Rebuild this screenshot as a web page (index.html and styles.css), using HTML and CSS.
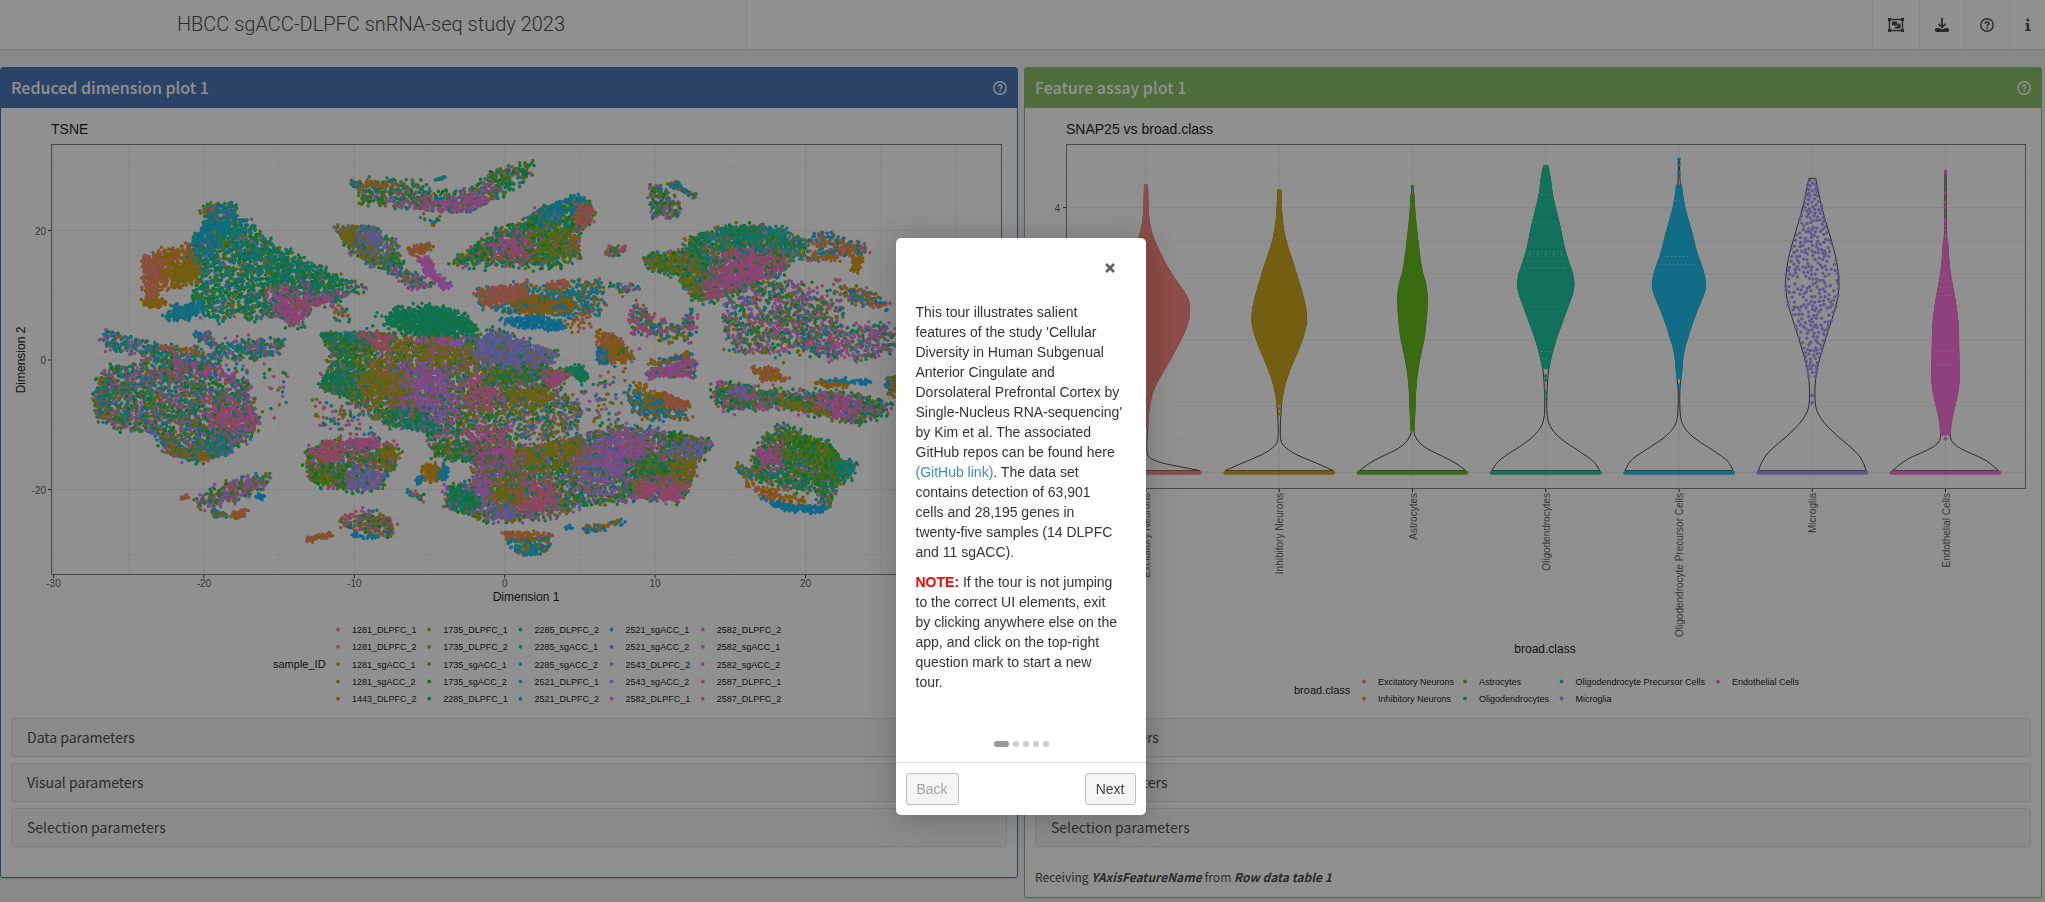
FILE: index.html
```html
<!DOCTYPE html>
<html lang="en">
<head>
<meta charset="utf-8">
<title>HBCC sgACC-DLPFC snRNA-seq study 2023</title>
<link rel="stylesheet" href="styles.css">
</head>
<body>
<header class="topbar">
  <h1 class="brand">HBCC sgACC-DLPFC snRNA-seq study 2023</h1>
  <nav class="tools">
    <a class="tool" href="#organize" aria-label="Organization">
      <svg width="16" height="14" viewBox="0 0 16 14" fill="none" stroke="currentColor"><path d="M1.5 1.5h13v11h-13z" stroke-width="1.4"/><path d="M0 0h3v3H0zM13 0h3v3h-3zM0 11h3v3H0zM13 11h3v3h-3zM4 3.500h5v4H4zM9.500 5.500H12.500v5H7V8.500h2.500z" fill="currentColor" stroke="none"/></svg>
    </a>
    <a class="tool" href="#export" aria-label="Export">
      <svg width="14" height="16" viewBox="0 0 14 16" fill="none" stroke="currentColor" stroke-width="1.8"><path d="M7 1v9M3.500 6.800L7 10.300l3.500-3.500"/><path d="M1.800 11H4l3 1.600L10 11h2.200A1.600 1.600 0 0 1 12.200 15H1.800A1.600 1.600 0 0 1 1.800 11z" fill="currentColor" stroke="none"/></svg>
    </a>
    <a class="tool" href="#help" aria-label="Documentation">
      <svg width="14" height="14" viewBox="0 0 14 14" fill="none" stroke="currentColor" stroke-width="1.4"><circle cx="7" cy="7" r="6.200"/><path d="M5.100 5.600C5.200 3.400 8.900 3.500 8.900 5.500C8.900 6.900 7.100 6.800 7.100 8.400M7.100 9.400v1.500" stroke-width="1.5"/></svg>
    </a>
    <a class="tool" href="#info" aria-label="Additional information">
      <svg width="6" height="14" viewBox="0 0 6 14" fill="currentColor"><circle cx="2.900" cy="2" r="1.500"/><path d="M.5 5h3.700v6.500H5.800V13H.2v-1.500h1.500v-5H.5z"/></svg>
    </a>
  </nav>
</header>

<main class="panels">
  <section class="panel panel-blue">
    <header class="panel-head">
      <h2 class="panel-title">Reduced dimension plot 1</h2>
      <a class="panel-help" href="#tour1" aria-label="Help">
        <svg width="14" height="14" viewBox="0 0 14 14" fill="none" stroke="currentColor" stroke-width="1.4"><circle cx="7" cy="7" r="6.200"/><path d="M5.100 5.600C5.200 3.400 8.900 3.500 8.900 5.500C8.900 6.900 7.100 6.800 7.100 8.400M7.100 9.400v1.500"/></svg>
      </a>
    </header>
    <svg class="plot" id="tsne" viewBox="1 108 1016 610" role="img" aria-label="TSNE plot"></svg>
    <div class="params">
      <button class="param" type="button">Data parameters</button>
      <button class="param" type="button">Visual parameters</button>
      <button class="param" type="button">Selection parameters</button>
    </div>
  </section>

  <section class="panel panel-green">
    <header class="panel-head">
      <h2 class="panel-title">Feature assay plot 1</h2>
      <a class="panel-help" href="#tour2" aria-label="Help">
        <svg width="14" height="14" viewBox="0 0 14 14" fill="none" stroke="currentColor" stroke-width="1.4"><circle cx="7" cy="7" r="6.200"/><path d="M5.100 5.600C5.200 3.400 8.900 3.500 8.900 5.500C8.900 6.900 7.100 6.800 7.100 8.400M7.100 9.400v1.500"/></svg>
      </a>
    </header>
    <svg class="plot" id="violin" viewBox="1025 108 1016 610" role="img" aria-label="SNAP25 vs broad.class"></svg>
    <div class="params">
      <button class="param" type="button">Data parameters</button>
      <button class="param" type="button">Visual parameters</button>
      <button class="param" type="button">Selection parameters</button>
    </div>
    <p class="receiving">Receiving <em>YAxisFeatureName</em> from <em>Row data table 1</em></p>
  </section>
</main>

<div class="overlay"></div>
<div class="tour" role="dialog" aria-label="Tour">
  <div class="tour-head"><button class="tour-close" type="button" aria-label="Close"><svg width="10" height="10" viewBox="0 0 10 10" stroke="currentColor" stroke-width="2.500"><path d="M1 1l8 8M9 1L1 9"/></svg></button></div>
  <div class="tour-text">
    <p>This tour illustrates salient features of the study 'Cellular Diversity in Human Subgenual Anterior Cingulate and Dorsolateral Prefrontal Cortex by Single-Nucleus RNA-sequencing' by Kim et al. The associated GitHub repos can be found here <a href="#github">(GitHub link)</a>. The data set contains detection of 63,901<br>cells and 28,195 genes in<br>twenty-five samples (14 DLPFC<br>and 11 sgACC).</p>
    <p><strong>NOTE:</strong> If the tour is not jumping to the correct UI elements, exit<br>by clicking anywhere else on the app, and click on the top-right question mark to start a new<br>tour.</p>
  </div>
  <div class="tour-dots">
    <a class="dot dot-active" href="#s1" aria-label="Step 1"></a><a class="dot" href="#s2" aria-label="Step 2"></a><a class="dot" href="#s3" aria-label="Step 3"></a><a class="dot" href="#s4" aria-label="Step 4"></a><a class="dot" href="#s5" aria-label="Step 5"></a>
  </div>
  <div class="tour-foot">
    <button class="tour-btn tour-off" type="button">Back</button>
    <button class="tour-btn" type="button">Next</button>
  </div>
</div>
<script src="plots.js"></script>
</body>
</html>
```
FILE: styles.css
```css
* { box-sizing: border-box; }

body {
  margin: 0;
  min-height: 100vh;
  background: #ecf0f5;
  color: #333;
  font: 14px/20px "Liberation Sans", Arial, sans-serif;
}

.topbar {
  display: flex;
  height: 50px;
  background: #fff;
  border-bottom: 1px solid #d2d6de;
}

.brand {
  width: 747px;
  margin: 0;
  padding-right: 4px;
  border-right: 1px solid #eee;
  font-family: Roboto, "Liberation Sans", sans-serif;
  font-size: 20px;
  font-weight: 300;
  line-height: 48px;
  text-align: center;
}

.tools { display: flex; margin-left: auto; }

.tool {
  display: flex;
  align-items: center;
  padding: 0 15px;
  border-left: 1px solid #eee;
  color: #333;
}

.tool:last-child { padding-right: 14px; }

.panels {
  display: grid;
  grid-template-columns: 1fr 1fr;
  gap: 6px;
  align-items: start;
  padding: 17px 3px 0 0;
}

.panel {
  padding-bottom: 30px;
  background: #fff;
  border: 1px solid;
  border-radius: 3px;
  box-shadow: 0 1px 1px rgba(0, 0, 0, 0.1);
}

.panel-blue { border-color: #3565aa; }
.panel-green { border-color: #7bb854; padding-bottom: 10px; }
.panel-blue .panel-head { background: #3565aa; }
.panel-green .panel-head { background: #7bb854; }

.panel-head {
  display: flex;
  align-items: center;
  justify-content: space-between;
  height: 40px;
  padding: 0 10px;
  color: #fff;
}

.panel-title {
  margin: 0;
  padding-bottom: 2px;
  font-family: "Noto Sans CJK SC", "Noto Sans", sans-serif;
  font-size: 16px;
  font-weight: 500;
  line-height: 20px;
}

.panel-help { display: flex; color: #fff; }

.plot {
  display: block;
  width: 100%;
  font-family: "Liberation Sans", Arial, sans-serif;
}

.plot .title { font-size: 14px; }
.plot .axis { font-size: 12px; }
.plot .key { font-size: 11px; }
.plot .label { font-size: 9px; }
.plot .tick { font-size: 10px; fill: #4d4d4d; }

.params {
  display: flex;
  flex-direction: column;
  gap: 6px;
  padding: 0 10px;
}

.param {
  height: 39px;
  padding: 0 15px 1px;
  border: 1px solid #ddd;
  border-radius: 3px;
  background: #f5f5f5;
  box-shadow: 0 1px 1px rgba(0, 0, 0, 0.05);
  color: #333;
  font: 14px/20px "Noto Sans CJK SC", "Noto Sans", sans-serif;
  text-align: left;
}

.receiving {
  margin: 20px 10px 0;
  font: 12px/20px "Noto Sans CJK SC", "Noto Sans", sans-serif;
}

.receiving em { font-weight: 700; }

.overlay {
  position: fixed;
  inset: 0;
  background: rgba(33, 33, 33, 0.5);
}

.tour {
  position: absolute;
  top: 238px;
  left: calc(50% - 127px);
  width: 250px;
  border-radius: 5px;
  background: #fff;
  box-shadow: 0 3px 30px rgba(33, 33, 33, 0.3);
}

.tour-head {
  display: flex;
  justify-content: flex-end;
  height: 44px;
  padding: 20px 26px 0;
}

.tour-close {
  width: 20px;
  height: 20px;
  padding: 5px;
  border: 0;
  background: none;
  color: #616161;
  line-height: 0;
}

.tour-text { padding: 20px; }
.tour-text p { margin: 0 0 10px; }
.tour-text a { color: #3c8dbc; text-decoration: none; }
.tour-text strong { color: #f00; }

.tour-dots {
  display: flex;
  align-items: center;
  justify-content: center;
  gap: 4px;
  height: 40px;
  padding: 4px 0 0 2px;
}

.dot {
  width: 6px;
  height: 6px;
  border-radius: 10px;
  background: #ccc;
}

.dot-active { width: 15px; background: #999; }

.tour-foot {
  display: flex;
  justify-content: space-between;
  padding: 10px;
  border-top: 1px solid #e0e0e0;
}

.tour-btn {
  height: 32px;
  padding: 5px 10px;
  border: 1px solid #bdbdbd;
  border-radius: 3px;
  background: #f4f4f4;
  color: #424242;
  font: 14px/20px "Liberation Sans", Arial, sans-serif;
  text-shadow: 1px 1px 0 #fff;
}

.tour-off { color: #9e9e9e; }
```
FILE: plots.js
```js
// Small seeded generator so the plots are the same on every load.
let seed = 20230;
function rnd() {
  seed = (seed * 1664525 + 1013904223) % 4294967296;
  return seed / 4294967296;
}
function text(cls, x, y, s, extra) {
  return `<text class="${cls}" x="${x}" y="${y}" ${extra || ''}>${s}</text>`;
}
function line(x1, y1, x2, y2, colour, w) {
  return `<path d="M${x1} ${y1}L${x2} ${y2}" stroke="${colour}" stroke-width="${w}" fill="none"/>`;
}
const MID = 'text-anchor="middle"', END = 'text-anchor="end"';

// ---------- TSNE ----------
const hues = ['#F8766D', '#ED8141', '#E08B00', '#CF9400', '#BB9D00', '#A3A500', '#85AD00', '#5BB300', '#00B81F',
  '#00BC59', '#00BF7D', '#00C19C', '#00C0B8', '#00BDD0', '#00B8E5', '#00B0F6', '#00A5FF', '#7997FF', '#AC88FF',
  '#CF78FF', '#E76BF3', '#F763E0', '#FF62C6', '#FF65AE', '#FF6C90'];
const groups = {
  r: [0, 1], o: [2, 3], y: [4, 5], g: [6, 7, 8], e: [9, 10, 11], t: [12, 13], b: [14, 15, 16],
  p: [17, 18], v: [19, 20], m: [21, 22, 23], k: [23, 24], '*': hues.map((_, i) => i)
};
// Colour mix, number of cells, outline (a third of a pixel per unit, from 80,140).
const clusters = [
  ['*eetge', 2000, '370,200 465,185 475,230 520,250 540,290 640,340 680,370 780,410 870,450 800,465 740,490 700,500 660,555 630,555 600,530 480,535 400,540 340,500 340,450 370,430 330,350 330,300 370,260'],
  ['tte', 260, '390,230 465,190 470,290 560,330 640,380 560,390 430,330'],
  ['e', 260, '560,350 690,380 770,420 760,450 640,420'],
  ['oor', 430, '240,330 330,320 355,370 350,425 290,440 220,450 225,490 190,490 195,440'],
  ['r', 190, '190,345 235,340 240,400 230,470 205,470 190,410'],
  ['oy', 170, '270,370 350,370 355,420 280,440'],
  ['o', 60, '185,480 250,480 270,500 200,500'],
  ['ro', 40, '370,200 405,196 402,215 375,220'],
  ['bbt', 330, '335,290 390,240 440,190 460,210 410,250 400,330 350,330'],
  ['bbt', 160, '250,530 290,490 375,490 375,510 320,540 260,540'],
  ['m', 300, '590,470 670,460 700,500 660,555 635,558 600,510'],
  ['m', 70, '690,500 720,480 770,475 860,450 760,495'],
  ['*', 30, '750,490 810,500 810,540 770,545'],
  ['*evt', 620, '65,575 110,580 170,600 260,615 380,630 470,600 625,597 590,640 520,655 430,655 400,680 300,690 220,660 130,635 80,625'],
  ['or', 60, '240,612 370,622 365,630 240,625'],
  ['*b', 60, '340,578 390,580 410,620 350,600'],
  ['*', 60, '200,650 540,660 480,720 300,700'],
  ['*egvmtg', 2300, '90,680 200,670 290,660 330,720 440,735 500,715 525,790 540,850 500,900 440,945 350,965 260,940 230,880 120,865 50,830 45,770 60,710'],
  ['m*', 150, '290,660 400,680 470,700 460,720 330,715'],
  ['bo', 130, '45,740 65,700 78,720 75,860 50,830'],
  ['oob', 280, '110,880 180,905 250,925 350,945 440,940 430,955 340,965 240,945 170,920'],
  ['mk', 260, '380,820 500,800 515,870 450,890'],
  ['pte', 160, '370,890 470,890 460,935 390,950'],
  ['*', 22, '550,680 640,680 600,860 550,860'],
  ['*gv', 300, '350,1080 440,1030 520,1010 568,1010 540,1050 470,1080 360,1102'],
  ['bo', 60, '390,1105 430,1120 440,1130 400,1130'],
  ['ro', 50, '455,1120 500,1105 490,1130 460,1135'],
  ['b', 20, '525,1070 552,1060 545,1075 530,1078'],
  ['r', 12, '303,1065 328,1070 328,1075 305,1072'],
  ['or', 45, '670,1202 750,1178 755,1185 680,1206'],
  ['*kg', 250, '770,1145 850,1110 900,1125 950,1145 930,1185 870,1180 800,1160'],
  ['b', 20, '820,1185 890,1187 888,1193 825,1191'],
  ['*mge', 850, '680,930 760,900 900,895 965,935 930,1000 890,1050 800,1050 700,1030 680,990'],
  ['p', 230, '785,1015 910,1000 890,1050 800,1042'],
  ['g', 210, '685,990 780,990 790,1030 730,1035'],
  ['k', 160, '680,940 750,900 810,910 780,940 700,960'],
  ['m', 110, '810,895 900,895 890,920 820,920'],
  ['yo', 90, '900,935 965,935 930,985 900,970'],
  ['*', 75, '710,780 860,800 900,880 800,890 700,850'],
  ['o', 110, '1022,980 1060,970 1090,980 1085,1020 1050,1028 1025,1010'],
  ['b', 60, '1085,970 1105,985 1095,1015 1080,1015'],
  ['b', 20, '1010,1020 1025,1010 1022,1035 1012,1035'],
  ['*', 22, '965,1043 1042,1075 1035,1090 985,1065'],
  ['*vymgeyge', 3500, '720,580 850,575 1000,590 1200,590 1260,570 1350,610 1440,640 1400,690 1480,700 1420,740 1300,760 1260,830 1300,900 1400,950 1250,1000 1180,970 1060,950 1040,880 900,850 850,800 720,740 760,650'],
  ['*vymgepge', 3900, '1180,900 1300,930 1500,890 1600,860 1800,880 1900,905 1850,960 1840,1010 1820,1060 1790,1085 1700,1075 1600,1085 1500,1100 1430,1125 1350,1140 1200,1140 1100,1100 1100,1040 1180,1030'],
  ['*yve', 520, '1260,740 1420,740 1510,790 1500,860 1430,900 1270,890'],
  ['*', 60, '1500,690 1620,740 1640,850 1500,860'],
  ['e', 900, '915,545 960,505 1080,505 1160,535 1190,575 1100,590 1000,580'],
  ['e', 90, '880,530 960,495 1100,500 1240,560 1220,610 900,590'],
  ['gge', 300, '725,600 870,590 880,630 760,645'],
  ['et', 90, '720,580 820,575 820,590 725,595'],
  ['e', 480, '710,740 750,705 830,705 838,770 780,790 720,770'],
  ['v', 950, '930,690 1060,640 1120,740 1080,860 1010,850 930,780'],
  ['v', 130, '1020,590 1140,590 1130,625 1040,620'],
  ['y', 420, '840,680 980,680 960,790 900,810 840,770'],
  ['y', 340, '900,610 1030,610 1200,635 1230,670 1100,665 950,640'],
  ['e', 200, '900,820 1060,835 1050,880 950,865'],
  ['eg', 200, '1060,920 1180,920 1190,965 1100,960'],
  ['k', 170, '1165,740 1240,725 1240,790 1190,790'],
  ['k', 110, '850,575 950,590 920,615 860,600'],
  ['p', 850, '1180,610 1260,580 1400,640 1480,608 1450,660 1370,690 1250,680'],
  ['gge', 240, '1200,690 1400,690 1400,720 1220,725'],
  ['e', 110, '1460,690 1500,675 1525,710 1500,722'],
  ['mk', 190, '1400,710 1490,705 1490,730 1410,740'],
  ['y', 200, '1260,740 1400,730 1400,790 1290,780'],
  ['y', 360, '1310,930 1500,900 1510,950 1350,985'],
  ['vp', 450, '1500,930 1640,890 1640,1000 1520,1030'],
  ['mv', 260, '1620,880 1720,880 1700,970 1600,970'],
  ['m', 220, '1180,880 1300,890 1290,970 1200,960'],
  ['g', 140, '1760,880 1880,900 1800,920'],
  ['p', 170, '1760,930 1900,905 1850,950'],
  ['eg', 230, '1650,970 1790,980 1700,1020'],
  ['km', 300, '1680,1030 1825,1035 1790,1085 1690,1070'],
  ['y', 130, '1790,960 1850,980 1830,1020 1780,1010'],
  ['k', 260, '1300,1050 1400,1050 1450,1090 1330,1110'],
  ['y', 210, '1220,1020 1310,1030 1300,1090 1210,1090'],
  ['p', 110, '1230,1100 1300,1105 1280,1135'],
  ['v', 170, '1160,1030 1230,1000 1220,1080 1170,1080'],
  ['e', 210, '1095,1060 1170,1040 1180,1100 1110,1100'],
  ['*ge', 720, '805,125 950,120 1030,135 1060,160 1180,150 1230,100 1290,80 1355,70 1360,100 1330,130 1240,180 1180,210 1100,220 1000,205 900,195 840,190 830,150'],
  ['vm', 280, '900,190 1000,200 1120,205 1240,150 1230,185 1120,230 1000,215'],
  ['ro', 60, '820,128 940,120 975,128 830,142'],
  ['b', 20, '805,122 840,126 830,135 810,135'],
  ['be', 9, '1065,120 1093,113 1090,118'],
  ['*', 14, '1020,235 1080,235 1060,255'],
  ['*egp', 500, '765,258 880,258 950,310 955,360 985,390 970,410 900,385 850,360 790,310'],
  ['y', 150, '765,260 800,260 850,330 870,365 780,310'],
  ['p', 80, '840,275 910,285 900,320 850,310'],
  ['or', 75, '980,325 1060,308 1050,330 1000,350'],
  ['vm', 150, '1020,350 1050,358 1060,400 1120,443 1090,438 1040,400'],
  ['*me', 90, '940,390 1010,400 1060,440 980,450'],
  ['*ge', 1400, '1110,365 1180,320 1240,280 1330,240 1400,200 1490,165 1540,200 1535,250 1500,270 1495,350 1440,380 1350,380 1240,375 1130,378'],
  ['bt', 170, '1380,215 1490,162 1510,180 1400,235'],
  ['r', 160, '1505,190 1542,200 1530,270 1500,270'],
  ['m', 190, '1240,310 1360,280 1340,340 1250,350'],
  ['gy', 180, '1370,270 1450,270 1450,340 1380,330'],
  ['ro', 40, '1480,295 1515,300 1500,325 1485,315'],
  ['bto', 620, '1185,470 1200,445 1320,435 1400,440 1430,430 1560,420 1568,520 1480,530 1400,530 1300,520 1200,500'],
  ['r', 230, '1188,460 1330,432 1340,470 1230,495'],
  ['r', 50, '1400,430 1460,422 1460,440 1405,445'],
  ['ooob', 430, '1290,490 1360,470 1480,478 1470,520 1330,520'],
  ['b', 210, '1255,535 1380,530 1460,550 1450,570 1400,572 1300,560'],
  ['or', 30, '1530,510 1565,515 1490,575 1460,555'],
  ['oor', 270, '1560,575 1600,590 1660,645 1640,662 1570,665 1560,620'],
  ['b', 60, '1550,630 1570,620 1585,675 1560,670'],
  ['*', 25, '1560,640 1680,620 1630,720 1600,720'],
  ['*', 35, '1560,420 1690,440 1630,465'],
  ['*meg', 170, '1710,150 1740,135 1800,190 1790,230 1710,230'],
  ['bo', 55, '1750,126 1790,128 1855,170 1840,172 1790,148'],
  ['*mr', 50, '1570,340 1590,320 1645,320 1600,350'],
  ['*egty', 1900, '1690,350 1800,335 1830,290 1920,265 2010,255 2100,265 2170,300 2180,340 2120,370 2110,400 2050,420 1970,450 1900,480 1850,480 1810,440 1790,400 1700,390'],
  ['m', 620, '1920,350 2120,360 2110,400 2000,440 1900,475 1880,450 1920,400'],
  ['yg', 240, '1690,350 1800,345 1870,430 1840,450 1780,400 1700,385'],
  ['et', 260, '1840,285 2010,258 2165,295 2160,320 1950,290 1830,310'],
  ['obr', 260, '2180,295 2230,280 2310,300 2370,330 2340,350 2180,360 2210,320'],
  ['o', 60, '2320,350 2350,350 2330,400 2310,400'],
  ['obr', 130, '2280,440 2370,460 2425,495 2420,505 2310,480'],
  ['*mevg', 850, '1930,500 2000,440 2130,420 2200,470 2280,480 2290,560 2200,600 2290,640 2100,635 1980,630 1940,590'],
  ['*mve', 400, '2160,570 2300,570 2380,545 2450,570 2440,625 2380,660 2200,650'],
  ['*mke', 240, '1660,490 1700,510 1740,550 1800,555 1840,505 1845,570 1740,580 1660,580 1650,530'],
  ['*', 25, '1740,590 1840,580 1840,605 1740,605'],
  ['ob', 80, '1710,665 1760,655 1830,638 1840,645 1730,678'],
  ['*mv', 270, '1700,690 1780,680 1810,655 1850,660 1845,710 1700,710'],
  ['o', 200, '1650,735 1670,740 1820,790 1830,800 1730,790'],
  ['bbo', 230, '1638,752 1680,770 1780,795 1840,830 1690,835 1660,800'],
  ['r', 60, '1740,760 1820,785 1810,810 1780,800'],
  ['ro', 130, '2010,680 2090,685 2100,708 2150,720 2050,722'],
  ['b', 70, '2210,720 2370,720 2360,730 2230,730'],
  ['o', 45, '2200,728 2260,728 2310,740 2240,740'],
  ['ob', 60, '2415,720 2448,712 2448,770 2430,770'],
  ['*gem', 1100, '1895,750 1930,725 2000,740 2150,755 2320,765 2430,790 2410,820 2340,850 2250,830 2100,800 1940,810 1900,780'],
  ['p', 60, '1950,735 2010,750 1990,762 1955,750'],
  ['m', 200, '2200,770 2330,770 2310,840 2250,820'],
  ['y', 110, '2100,795 2220,805 2210,820 2130,812'],
  ['*ge', 1200, '2100,850 2260,920 2280,960 2330,970 2310,1010 2270,1030 2240,1110 2200,1050 2100,1040 2010,1010 2020,960 2040,910'],
  ['g', 400, '2110,860 2250,920 2280,960 2260,1010 2180,960'],
  ['m', 110, '2040,930 2090,930 2100,970 2050,975'],
  ['te', 80, '2290,960 2330,960 2310,1000 2280,990'],
  ['oor', 120, '1995,1020 2040,1040 2150,1075 2190,1100 2080,1085 2000,1035'],
  ['b', 150, '2030,1070 2120,1095 2235,1100 2230,1115 2120,1112'],
  ['oyb', 40, '1970,970 2040,1000 2000,1020 1970,990'],
  ['ro', 110, '1265,1178 1415,1180 1400,1200 1290,1200'],
  ['bto', 150, '1280,1200 1415,1195 1400,1235 1340,1247 1300,1235'],
  ['ob', 60, '1505,1155 1550,1160 1630,1135 1635,1143 1540,1178 1515,1175'],
  ['b', 7, '1450,1160 1472,1160 1470,1165'],
  ['*', 130, '1900,640 1960,620 1960,500 2000,420 2330,400 2300,640 2100,670']
].map(([mix, count, outline]) => ({
  mix, count, points: outline.split(' ').map(s => s.split(',').map(Number))
}));

function inside(x, y, p) {
  let hit = false;
  for (let i = 0, j = p.length - 1; i < p.length; j = i++) {
    if ((p[i][1] > y) !== (p[j][1] > y) &&
      x < (p[j][0] - p[i][0]) * (y - p[i][1]) / (p[j][1] - p[i][1]) + p[i][0]) hit = !hit;
  }
  return hit;
}

// Large mixed clusters; a one-colour patch that lies on one stays within it and fades at its edges.
const bases = clusters.filter(c => c.mix[0] === '*' && c.count > 450);

function cells() {
  let out = '';
  for (const { mix, count, points: p } of clusters) {
    const xs = p.map(q => q[0]), ys = p.map(q => q[1]);
    const x0 = Math.min(...xs), x1 = Math.max(...xs), y0 = Math.min(...ys), y1 = Math.max(...ys);
    const mx = xs.reduce((a, b) => a + b) / p.length, my = ys.reduce((a, b) => a + b) / p.length;
    const home = mix.includes('*') ? [] : bases.filter(b => inside(mx, my, b.points));
    const patch = home.length > 0;
    const size = Math.min(x1 - x0, y1 - y0);
    const spread = patch ? Math.min(70, 0.5 * size + 14) : size > 60 ? 18 : 9;
    const total = patch ? Math.round(count * 0.72) : count;
    const layers = [{}, {}, {}, {}];
    for (let n = 0, tries = 0; n < total && tries < 200000; tries++) {
      let x = x0 + rnd() * (x1 - x0), y = y0 + rnd() * (y1 - y0);
      if (!inside(x, y, p)) continue;
      x += (rnd() + rnd() - 1) * spread;
      y += (rnd() + rnd() - 1) * spread;
      if (patch && !home.some(b => inside(x, y, b.points))) continue;
      const g = groups[patch && rnd() < 0.12 ? '*' : mix[Math.floor(rnd() * mix.length)]];
      const c = g[Math.floor(rnd() * g.length)];
      const l = layers[n * 4 / total | 0];
      l[c] = (l[c] || '') + `M${(80 + x / 3).toFixed(1)} ${(140 + y / 3).toFixed(1)}h0`;
      n++;
    }
    for (const l of layers) {
      const order = Object.keys(l).map(c => [rnd(), c]).sort((a, b) => a[0] - b[0]);
      for (const [, c] of order) out += `<path d="${l[c]}" stroke="${hues[c]}"/>`;
    }
  }
  return `<g fill="none" stroke-width="3.6" stroke-linecap="round">${out}</g>`;
}

function drawTsne() {
  let s = text('title', 51, 134, 'TSNE');
  for (let i = 0; i < 13; i++) { const x = 53.5 + i * 75.2; if (x < 1000) s += line(x, 144, x, 574, '#ebebeb', i % 2 ? 0.6 : 1.1); }
  [166, 295.5, 425, 554.5].forEach(y => s += line(51, y, 1001, y, '#ebebeb', 0.6));
  [[230.5, '20'], [360, '0'], [489.5, '-20']].forEach(([y, t]) => {
    s += line(51, y, 1001, y, '#ebebeb', 1.1) + line(48, y, 51, y, '#333', 1.1) + text('tick', 46, y + 4, t, END);
  });
  s += cells();
  s += '<rect x="51.5" y="144.500" width="950" height="430" fill="none" stroke="#707070" stroke-width="1"/>';
  for (let i = 0; i < 7; i++) {
    const x = 53.5 + i * 150.4;
    s += line(x, 575, x, 578, '#333', 1.1) + text('tick', x, 587, -30 + i * 10, MID);
  }
  s += text('axis', 526, 601, 'Dimension 1', MID) + text('axis', 0, 0, 'Dimension 2', MID + ' transform="translate(25 360) rotate(-90)"');
  s += text('key', 273, 668, 'sample_ID');
  const ids = ['1281_DLPFC_1', '1281_DLPFC_2', '1281_sgACC_1', '1281_sgACC_2', '1443_DLPFC_2',
    '1735_DLPFC_1', '1735_DLPFC_2', '1735_sgACC_1', '1735_sgACC_2', '2285_DLPFC_1',
    '2285_DLPFC_2', '2285_sgACC_1', '2285_sgACC_2', '2521_DLPFC_1', '2521_DLPFC_2',
    '2521_sgACC_1', '2521_sgACC_2', '2543_DLPFC_2', '2543_sgACC_2', '2582_DLPFC_1',
    '2582_DLPFC_2', '2582_sgACC_1', '2582_sgACC_2', '2587_DLPFC_1', '2587_DLPFC_2'];
  ids.forEach((t, i) => {
    const x = 338 + Math.floor(i / 5) * 91.2, y = 629.5 + (i % 5) * 17.3;
    s += `<circle cx="${x}" cy="${y}" r="1.900" fill="${hues[i]}"/>` + text('label', x + 14, y + 3.5, t);
  });
  document.getElementById('tsne').innerHTML = s;
}

// ---------- Violins ----------
// Profiles are [height, half width]; heights run in thirds of a pixel from 130.
const violins = [
  { name: 'Excitatory Neurons', c: '#F8766D', body: [[165, 1.5], [233, 2], [280, 3], [325, 7], [400, 19], [440, 27], [480, 37], [510, 43], [550, 44], [590, 41], [640, 33], [700, 22], [760, 10], [800, 5], [830, 3], [895, 1.5]], tail: [[970, 0.5], [985, 3], [1000, 16], [1010, 34], [1022, 54]], dots: [] },
  { name: 'Inhibitory Neurons', c: '#C49A00', body: [[180, 1.5], [240, 2], [300, 4], [350, 8], [400, 14], [450, 19], [500, 24], [540, 27], [580, 27.5], [620, 24], [660, 19], [700, 13], [740, 8], [780, 4], [825, 2]], tail: [[925, 0.5], [950, 4], [975, 17], [1000, 38], [1022, 54]], dots: [836, 852] },
  { name: 'Astrocytes', c: '#53B400', body: [[195, 1.5], [240, 2], [300, 4], [350, 6], [400, 8], [430, 10], [470, 14], [510, 15], [560, 14], [620, 12], [660, 9], [720, 5], [780, 3], [830, 2.5], [902, 1.5]], top: 170, tail: [[905, 1], [930, 4], [955, 13], [980, 31], [1000, 44], [1022, 53]], dots: [170] },
  { name: 'Oligodendrocytes', c: '#00C094', body: [[107, 2], [150, 5], [190, 6], [250, 11], [300, 15], [350, 18], [400, 23], [430, 27], [465, 28.5], [490, 27], [530, 22], [580, 16], [620, 11], [660, 7], [700, 4], [715, 3]], tail: [[740, 2], [800, 1], [860, 1], [890, 4], [920, 12], [950, 26], [980, 42], [1000, 50], [1022, 54]], dots: [738, 750, 788, 806], gaps: [[193, 5], [278, 11], [365, 17], [373, 17], [395, 20], [413, 22], [530, 16], [665, 5], [685, 4]] },
  { name: 'Oligodendrocyte Precursor Cells', c: '#00B6EB', body: [[165, 2.5], [210, 4], [260, 8], [310, 13], [350, 16], [380, 19], [420, 24], [465, 27.5], [500, 24], [540, 18], [590, 12], [630, 8], [670, 4], [710, 3], [745, 2]], top: 88, tail: [[780, 0.6], [860, 1], [890, 4], [920, 13], [950, 28], [980, 44], [1000, 51], [1022, 54]], dots: [88, 103, 128, 766, 775], gaps: [[212, 4], [380, 12], [403, 18]] },
  { name: 'Microglia', c: '#A58AFF', loose: true, body: [[145, 3.5], [200, 7], [250, 11], [300, 16], [350, 21], [400, 25], [465, 27.5], [530, 24], [600, 16], [650, 11], [700, 6], [750, 3]], tail: [[790, 2.5], [830, 3], [860, 7], [900, 18], [940, 34], [980, 49], [1022, 54]], dots: [797, 818] },
  { name: 'Endothelial Cells', c: '#FB61D7', body: [[330, 2], [380, 3], [420, 4], [470, 7], [500, 9], [540, 11], [590, 13], [650, 13], [730, 14], [780, 13], [830, 9], [870, 6], [890, 5], [915, 5]], top: 125, tail: [[930, 5], [950, 11], [970, 25], [990, 41], [1022, 53]], dots: [125, 188, 217, 232, 268, 276, 288, 300, 313, 322, 926], gaps: [[438, 4], [472, 6], [497, 8], [663, 12], [705, 8]] }
];

function side(points, cx, sign) {
  return points.map(([y, w]) => [cx + sign * w, 130 + y / 3]);
}
// Joins points with quadratic curves through their midpoints.
function smooth(pts) {
  let d = `${pts[0][0]} ${pts[0][1]}`;
  for (let i = 1; i < pts.length - 1; i++) {
    d += `Q${pts[i][0]} ${pts[i][1]} ${(pts[i][0] + pts[i + 1][0]) / 2} ${(pts[i][1] + pts[i + 1][1]) / 2}`;
  }
  const l = pts[pts.length - 1];
  return d + `L${l[0]} ${l[1]}`;
}

function drawViolin() {
  let s = text('title', 1066, 134, 'SNAP25 vs broad.class');
  for (let i = 0; i < 10; i++) { const y = 174.5 + i * 33.1; s += line(1066, y, 2025, y, '#ebebeb', i % 2 ? 1.1 : 0.6); }
  s += line(1063, 207.5, 1066, 207.5, '#333', 1.1) + text('tick', 1060, 211.5, '4', END);
  violins.forEach((v, i) => {
    const cx = 1146 + i * 133.25;
    s += line(cx, 144, cx, 488, '#ebebeb', 1.1);
    const outline = [...(v.top ? [[v.top, 0.6], [v.body[0][0], 0.8]] : []), ...v.body, ...v.tail];
    s += `<path d="M${smooth(side(outline, cx, 1))}L${smooth(side(outline, cx, -1).reverse())}Z" fill="none" stroke="#333" stroke-width="1"/>`;
    s += `<path d="M${cx - 54} 472.700H${cx + 54}" stroke="${v.c}" stroke-width="4" stroke-linecap="round"/>`;
    if (v.loose) {
      const placed = [];
      for (let t = 0; t < 9000 && placed.length < 320; t++) {
        const y = 150 + rnd() * 590, k = v.body.findIndex(b => b[0] > y);
        if (k < 1) continue;
        const a = v.body[k - 1], b = v.body[k], w = a[1] + (b[1] - a[1]) * (y - a[0]) / (b[0] - a[0]);
        const x = (rnd() * 2 - 1) * w, py = y / 3;
        if (placed.every(q => (q[0] - x) ** 2 + (q[1] - py) ** 2 > 8)) placed.push([x, py]);
      }
      s += placed.map(q => `<circle cx="${(cx + q[0]).toFixed(1)}" cy="${(130 + q[1]).toFixed(1)}" r="1.700" fill="${v.c}"/>`).join('');
    } else {
      s += `<path d="M${smooth(side(v.body, cx, 1))}L${smooth(side(v.body, cx, -1).reverse())}Z" fill="${v.c}" stroke="${v.c}" stroke-width="1.2"/>`;
    }
    (v.gaps || []).forEach(([y, w]) => {
      s += `<path d="M${cx - w} ${130 + y / 3}h${2 * w}" stroke="#fff" stroke-opacity="0.6" stroke-width="1" stroke-dasharray="1.500 2.500 1 3"/>`;
    });
    s += v.dots.map(y => `<circle cx="${cx}" cy="${130 + y / 3}" r="1.800" fill="${v.c}"/>`).join('');
    s += line(cx, 489, cx, 492, '#333', 1.1);
    s += text('tick', 0, 0, v.name, END + ` transform="translate(${cx + 4} 493) rotate(-90)"`);
  });
  s += '<rect x="1066.500" y="144.500" width="959" height="344" fill="none" stroke="#707070" stroke-width="1"/>';
  s += text('axis', 1545, 653, 'broad.class', MID) + text('key', 1294, 694, 'broad.class');
  const cols = [1364, 1465, 1561.5, 1718];
  violins.forEach((v, i) => {
    const x = cols[i >> 1], y = i % 2 ? 698.5 : 681.5;
    s += `<circle cx="${x}" cy="${y}" r="1.900" fill="${v.c}"/>` + text('label', x + 14, y + 3.5, v.name);
  });
  document.getElementById('violin').innerHTML = s;
}

drawTsne();
drawViolin();
```
